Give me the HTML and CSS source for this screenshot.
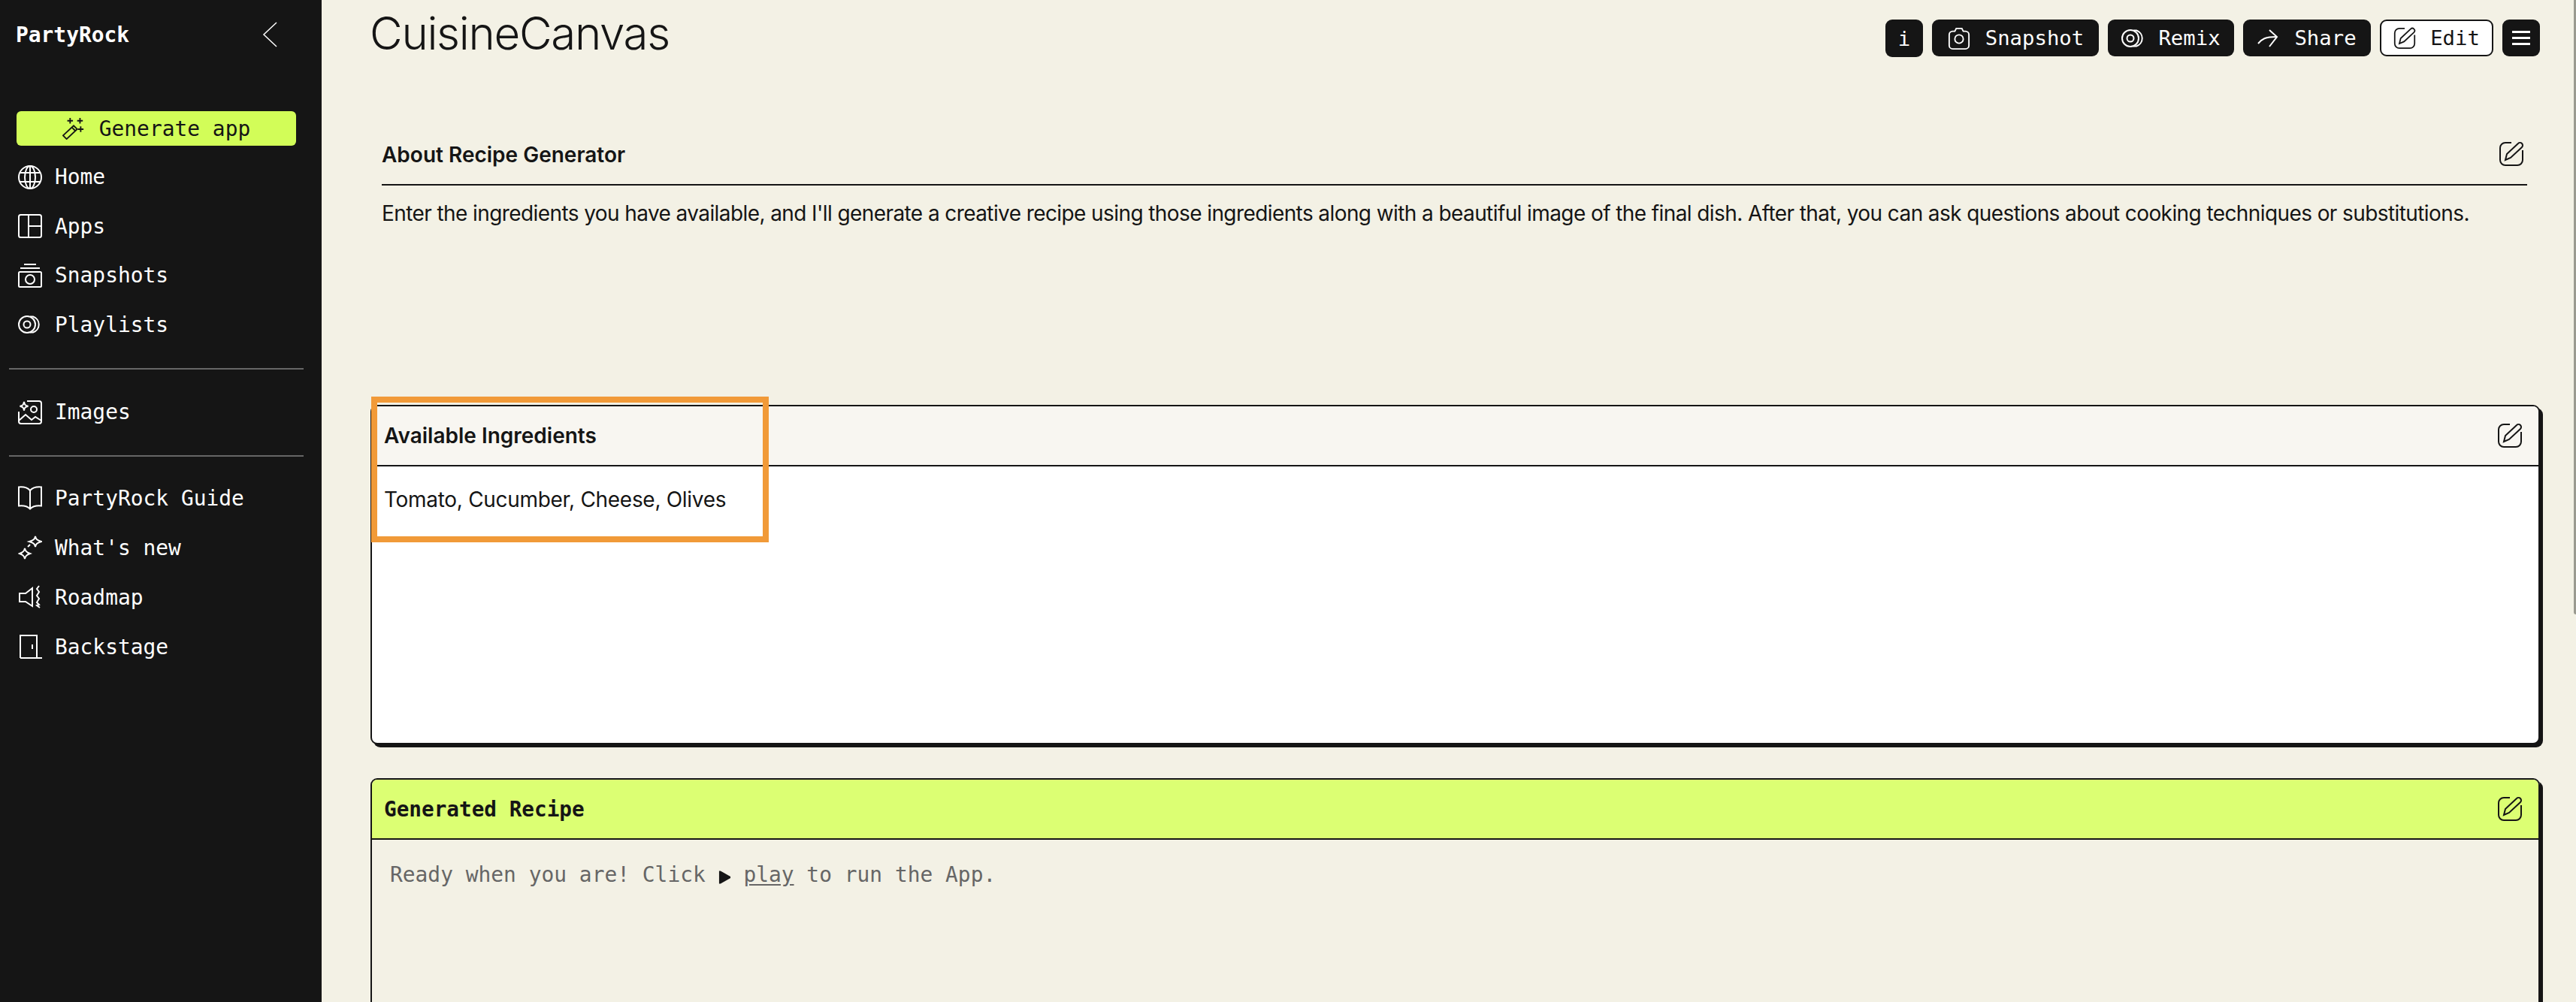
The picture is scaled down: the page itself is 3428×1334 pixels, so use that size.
FILE: index.html
```html
<!DOCTYPE html>
<html lang="en">
<head>
<meta charset="utf-8">
<title>CuisineCanvas - PartyRock</title>
<link rel="stylesheet" href="styles.css">
</head>
<body>
<div class="app">
  <aside class="sidebar">
    <div class="brand-row">
      <span class="brand">PartyRock</span>
      <svg class="chevron" viewBox="0 0 20 34" width="20" height="34"><path d="M19 1 2 17l17 16"/></svg>
    </div>
    <button class="generate">
      <svg class="ico" viewBox="0 0 32 32" width="30" height="30"><path d="M1 26 16 12l5 5L6 31z"/><path d="M13.500 14.500l5 5"/><path d="M11 1v8M7 5h8M25 1v8M21 5h8M26 13v8M22 17h8"/></svg>
      <span>Generate app</span>
    </button>
    <nav class="nav">
      <a class="nav-row"><svg class="ico" viewBox="0 0 32 32" width="32" height="32"><circle cx="16" cy="16" r="15"/><ellipse cx="16" cy="16" rx="7" ry="15"/><path d="M16 1v30M3 10h26M3 22h26"/></svg>Home</a>
      <a class="nav-row"><svg class="ico" viewBox="0 0 32 32" width="32" height="32"><rect x="1" y="1" width="30" height="30" rx="2.500"/><path d="M14 1v30M14 16h17"/></svg>Apps</a>
      <a class="nav-row"><svg class="ico" viewBox="0 0 32 32" width="32" height="32"><path d="M8 1h16M3 6h26"/><rect x="1" y="11" width="30" height="20" rx="1.500"/><circle cx="16" cy="21" r="6"/></svg>Snapshots</a>
      <a class="nav-row"><svg class="ico" viewBox="0 0 32 32" width="32" height="32"><circle cx="12" cy="16" r="11"/><circle cx="12" cy="16" r="4.500"/><path d="M16 5.500h4a11 11 0 0 1 0 21h-4"/></svg>Playlists</a>
    </nav>
    <hr class="divider divider-first">
    <nav class="nav">
      <a class="nav-row"><svg class="ico" viewBox="0 0 32 32" width="32" height="32"><path d="M12 1h16a3 3 0 0 1 3 3v24a3 3 0 0 1-3 3H4a3 3 0 0 1-3-3V15"/><path d="M8 2c.7 4 1.800 5 5.500 5.700C9.800 8.500 8.700 9.500 8 13.500 7.300 9.500 6.200 8.500 2.500 7.700 6.200 7 7.300 6 8 2z"/><circle cx="21" cy="12" r="4"/><path d="M1 27l9-8 8 7 5-4 8 5"/></svg>Images</a>
    </nav>
    <hr class="divider divider-second">
    <nav class="nav nav-wide">
      <a class="nav-row"><svg class="ico" viewBox="0 0 32 32" width="32" height="32"><path d="M16 6C12 1.500 6 1 1 1.500v25c5-.5 11 0 15 4 4-4 10-4.500 15-4v-25C26 1 20 1.500 16 6zM16 6v24"/></svg>PartyRock Guide</a>
      <a class="nav-row"><svg class="ico" viewBox="0 0 32 32" width="32" height="32"><path d="M23 1c.7 3.800 2.200 5.300 8 7-5.800 1.700-7.300 3.200-8 7-.7-3.800-2.200-5.300-8-7 5.800-1.700 7.300-3.200 8-7z"/><path d="M9 17c.7 3.800 2.200 5.300 7 7-4.800 1.700-6.300 3.200-7 7-.7-3.800-2.200-5.300-7-7 4.800-1.700 6.300-3.200 7-7z"/><path d="M13 15l3-3"/></svg>What's new</a>
      <a class="nav-row"><svg class="ico" viewBox="0 0 32 32" width="32" height="32"><path d="M2 11h8L19 4v24l-9-6H2z"/><path d="M28 1l-3 4 3 4-3 5 3 4-3 5 3 3-3 1 4 3"/></svg>Roadmap</a>
      <a class="nav-row"><svg class="ico" viewBox="0 0 32 32" width="32" height="32"><path d="M3 31V1h22v30M3 31h29"/><path d="M19 13v6"/></svg>Backstage</a>
    </nav>
  </aside>

  <main class="main">
    <header class="topbar">
      <h1 class="title">CuisineCanvas</h1>
      <div class="actions">
        <button class="btn btn-i">i</button>
        <button class="btn btn-snapshot"><svg class="ico" viewBox="0 0 32 32" width="32" height="30"><path d="M10 6l2-4h8l2 4h3a5 5 0 0 1 5 5v15a5 5 0 0 1-5 5H7a5 5 0 0 1-5-5V11a5 5 0 0 1 5-5z"/><circle cx="16" cy="17" r="6"/></svg>Snapshot</button>
        <button class="btn btn-remix"><svg class="ico" viewBox="0 0 32 32" width="32" height="32"><circle cx="12" cy="16" r="11"/><circle cx="12" cy="16" r="4.500"/><path d="M16 5.500h4a11 11 0 0 1 0 21h-4"/></svg>Remix</button>
        <button class="btn btn-share"><svg class="ico" viewBox="0 0 28 24" width="28" height="24"><path d="M1 19C6 13 10 10 26 10"/><path d="M16 1l10 9-10 13"/></svg>Share</button>
        <button class="btn btn-edit"><svg class="ico" viewBox="0 0 34 34" width="30" height="30"><use href="#edit-glyph"/></svg>Edit</button>
        <button class="btn btn-menu" aria-label="Menu"><span class="bars"></span></button>
      </div>
    </header>

    <section class="about">
      <div class="about-head">
        <h2 class="about-title">About Recipe Generator</h2>
        <svg class="ico ink" viewBox="0 0 34 34" width="34" height="34"><use href="#edit-glyph"/></svg>
      </div>
      <p class="about-text">Enter the ingredients you have available, and I'll generate a creative recipe using those ingredients along with a beautiful image of the final dish. After that, you can ask questions about cooking techniques or substitutions.</p>
    </section>

    <section class="card card-input">
      <div class="annotation"></div>
      <div class="card-head">
        <h3 class="card-title">Available Ingredients</h3>
        <svg class="ico ink" viewBox="0 0 34 34" width="34" height="34"><use href="#edit-glyph"/></svg>
      </div>
      <div class="card-body input-body">Tomato, Cucumber, Cheese, Olives</div>
    </section>

    <section class="card card-output">
      <div class="card-head head-lime">
        <h3 class="card-title mono-title">Generated Recipe</h3>
        <svg class="ico ink" viewBox="0 0 34 34" width="34" height="34"><use href="#edit-glyph"/></svg>
      </div>
      <div class="card-body output-body">Ready when you are! Click <svg class="play" viewBox="0 0 18 18" width="17" height="18"><path d="M1 0h2l14 8v2L3 18H1z"/></svg> <u>play</u> to run the App.</div>
    </section>
  </main>
  <div class="scroll-thumb"></div>
</div>
<svg class="defs" width="0" height="0"><defs><g id="edit-glyph"><path d="M17 2H9a7 7 0 0 0-7 7v16a7 7 0 0 0 7 7h16a7 7 0 0 0 7-7v-13"/><path d="M9 25l2-8L26 3a3 3 0 0 1 5 5L16 22z"/></g></defs></svg>
</body>
</html>
```
FILE: styles.css
```css
* { box-sizing: border-box; }
html, body { margin: 0; height: 100%; overflow: hidden; }
body { background: #f3f1e5; color: #151515; font-family: "Inter", "Noto Sans", sans-serif; }
h1, h2, h3, p { margin: 0; }
button { font: inherit; border: 0; padding: 0; }
.defs { position: absolute; }

.app { display: flex; height: 1334px; position: relative; overflow: hidden; }

.ico { flex: none; fill: none; stroke: currentColor; stroke-width: 2; }
.ink { color: #151515; }

.sidebar { flex: none; width: 428px; background: #151515; color: #fff; font-family: "DejaVu Sans Mono", monospace; font-size: 27.900px; font-weight: 400; padding: 0 24px 0 12px; }
.brand-row { display: flex; align-items: center; justify-content: space-between; height: 92px; padding: 0 35px 0 9px; }
.brand { font-weight: 700; }
.chevron { fill: none; stroke: #fff; stroke-width: 1.500; }
.generate { display: flex; align-items: center; justify-content: center; gap: 19px; width: 372px; height: 46px; margin: 56px 0 9px 10px; background: #d2fd58; color: #151515; border-radius: 6px; font-family: "DejaVu Sans Mono", monospace; font-size: 27.900px; }
.nav-row { display: flex; align-items: center; gap: 17px; height: 65.500px; padding-left: 12px; }
.nav-wide .nav-row { height: 66px; }
.divider { border: 0; height: 2px; background: #666; width: 392px; }
.divider-first { margin: 25px 0 24px; }
.divider-second { margin: 24.500px 0 22px; }

.main { flex: 1; min-width: 0; padding: 0 48px 0 65px; }
.topbar { display: flex; justify-content: space-between; align-items: flex-start; height: 164px; }
.title { font-weight: 300; font-size: 60px; letter-spacing: -1.300px; line-height: 88px; margin-left: -1px; }
.actions { display: flex; gap: 12px; margin-top: 26px; font-family: "DejaVu Sans Mono", monospace; font-size: 27.300px; }
.btn { display: flex; align-items: center; justify-content: center; gap: 19px; height: 49px; background: #151515; color: #fff; border-radius: 9px; font-family: inherit; font-size: inherit; }
.btn-i { width: 50px; height: 50px; }
.btn-snapshot { width: 222px; }
.btn-remix { width: 168px; gap: 17px; }
.btn-share { width: 170px; gap: 21px; }
.btn-edit { width: 151px; gap: 19px; background: #fff; color: #151515; border: 2px solid #151515; }
.btn-menu { width: 50px; }
.bars { display: block; width: 24px; height: 19px; border-top: 3px solid #fff; border-bottom: 3px solid #fff; background: linear-gradient(#fff, #fff) center / 100% 3px no-repeat; }

.about { padding: 0 17px 0 15px; height: 375px; }
.about-head { display: flex; align-items: center; justify-content: space-between; height: 83px; padding: 0 4px 0 0; border-bottom: 2px solid #151515; }
.about-title { font-size: 28px; font-weight: 600; padding-top: 2px; }
.about-text { font-size: 28px; letter-spacing: -0.590px; line-height: 40px; padding-top: 17px; white-space: nowrap; }

.card { position: relative; border: 2px solid #151515; border-radius: 9px; box-shadow: 4px 4px 0 #151515; }
.card-input { height: 452px; background: #fff; }
.card-output { height: 400px; margin-top: 45px; }
.card-head { display: flex; align-items: center; justify-content: space-between; height: 80px; padding: 0 21px 0 16px; border-bottom: 2px solid #151515; background: #f8f6f1; border-radius: 7px 7px 0 0; }
.head-lime { background: #dcff73; }
.card-title { font-size: 28px; font-weight: 600; }
.mono-title { font-family: "DejaVu Sans Mono", monospace; font-size: 27.700px; font-weight: 700; }
.input-body { font-size: 28px; letter-spacing: -0.300px; padding: 27px 16px; }
.output-body { font-family: "DejaVu Sans Mono", monospace; font-size: 27.900px; color: #666; padding: 30px 24px; display: block; }
.play { fill: #151515; vertical-align: -3px; }
.output-body u { text-underline-offset: 3px; }

.annotation { position: absolute; top: -13px; left: -1px; width: 529px; height: 194px; border: 8px solid #f19a38; z-index: 2; }
.scroll-thumb { position: absolute; top: 0; right: 0; width: 3px; height: 818px; background: #9a9a90; border-radius: 0 0 0 3px; }
```
